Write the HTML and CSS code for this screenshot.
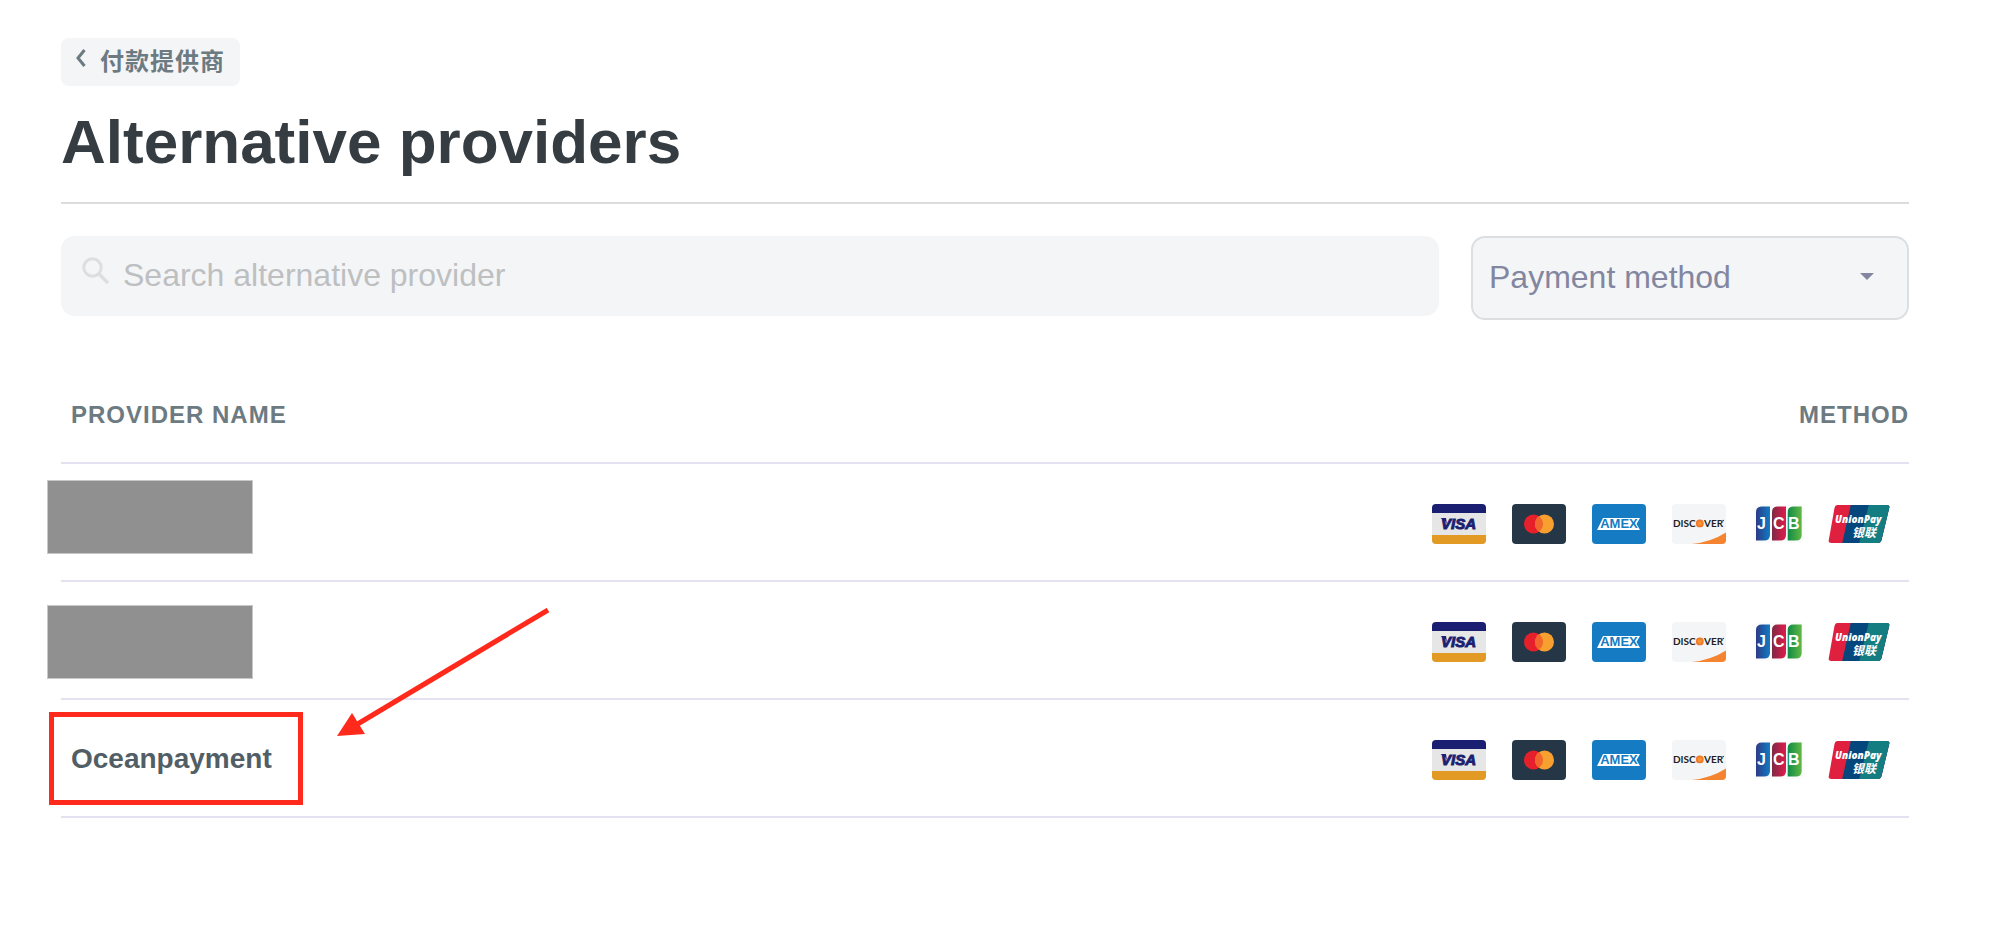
FILE: index.html
```html
<!DOCTYPE html>
<html lang="zh-CN">
<head>
<meta charset="utf-8">
<meta name="viewport" content="width=device-width, initial-scale=1">
<title>Alternative providers</title>
<link rel="stylesheet" href="styles.css">
</head>
<body>
<svg class="defs" aria-hidden="true">
  <defs>
    <linearGradient id="jcb-blue"><stop offset="0" stop-color="#2e3a86"/><stop offset="1" stop-color="#0f7cc4"/></linearGradient>
    <linearGradient id="jcb-red"><stop offset="0" stop-color="#7d2a46"/><stop offset="1" stop-color="#e21b4b"/></linearGradient>
    <linearGradient id="jcb-green"><stop offset="0" stop-color="#0f8a46"/><stop offset="1" stop-color="#62b846"/></linearGradient>
    <radialGradient id="disc-dot"><stop offset="0" stop-color="#f9a13a"/><stop offset="1" stop-color="#ef6f24"/></radialGradient>
    <clipPath id="card-clip"><rect width="54" height="40" rx="4"/></clipPath>
    <clipPath id="up-clip"><path d="M5.500 1H54.500Q58 1 57.200 4L49.500 36Q48.700 39 45.500 39H-0.500Q-4 39 -3.200 36L2.500 4Q3.200 1 5.500 1Z"/></clipPath>
  </defs>
  <symbol id="visa" viewBox="0 0 54 40">
    <g clip-path="url(#card-clip)">
      <rect width="54" height="40" fill="#e6e6e6"/>
      <rect width="54" height="9" fill="#1a1f71"/>
      <rect y="31" width="54" height="9" fill="#e39a25"/>
    </g>
    <path d="M8.500 14H14L15 20Q13 16 8.500 14Z" fill="#1a1f71"/>
  </symbol>
  <symbol id="mastercard" viewBox="0 0 54 40">
    <rect width="54" height="40" rx="4" fill="#253747"/>
    <circle cx="21.500" cy="20" r="9.500" fill="#e6202b"/>
    <circle cx="32.500" cy="20" r="9.500" fill="#f7a030"/>
    <path d="M27 12.250A9.500 9.500 0 0 1 27 27.750A9.500 9.500 0 0 1 27 12.250Z" fill="#f1662c"/>
  </symbol>
  <symbol id="amex" viewBox="0 0 54 40">
    <rect width="54" height="40" rx="4" fill="#157cc3"/>
    <path d="M5 26L11 14H48L44.500 20L48 26Z" fill="#fff"/>
  </symbol>
  <symbol id="discover" viewBox="0 0 54 40">
    <g clip-path="url(#card-clip)">
      <rect width="54" height="40" fill="#f4f5f7"/>
      <path d="M20 40Q39 38 54 28.500V40Z" fill="#f58430"/>
    </g>
    <circle cx="27.800" cy="19.400" r="3.900" fill="url(#disc-dot)"/>
    <circle cx="51.200" cy="16.500" r=".7" fill="#231f20"/>
  </symbol>
  <symbol id="jcb" viewBox="0 0 54 40">
    <rect x="1.500" y="0.500" width="51" height="38.500" rx="5" fill="#fbfbfc"/>
    <path d="M4 8Q4 2.500 10 2.500H18V31Q18 36.500 12 36.500H4Z" fill="url(#jcb-blue)"/>
    <path d="M20 8Q20 2.500 25.500 2.500H34V31Q34 36.500 28 36.500H20Z" fill="url(#jcb-red)"/>
    <path d="M35.700 8Q35.700 2.500 41.500 2.500H49.700V31Q49.700 36.500 44 36.500H35.700Z" fill="url(#jcb-green)"/>
  </symbol>
  <symbol id="unionpay" viewBox="0 0 54 40" overflow="visible">
    <g clip-path="url(#up-clip)">
      <rect x="-4" width="62" height="40" fill="#e0203f"/>
      <path d="M19 0H60V40H10Z" fill="#05477c"/>
      <path d="M37 0H60V40H27Z" fill="#147d82"/>
    </g>
  </symbol>
</svg>

<main class="page">
  <a class="back" href="#">
    <svg class="back-icon" viewBox="0 0 10 18" aria-hidden="true"><path d="M8.500 1L2 9L8.500 17" fill="none" stroke="#6c7a82" stroke-width="3"/></svg>
    <span>付款提供商</span>
  </a>
  <h1 class="title">Alternative providers</h1>

  <form class="filters">
    <div class="search">
      <svg class="search-icon" viewBox="0 0 28 28" aria-hidden="true"><circle cx="10.500" cy="10.500" r="8.700" fill="none" stroke="#dcdfe2" stroke-width="3"/><path d="M17 17L26 26" stroke="#dcdfe2" stroke-width="3.600"/></svg>
      <input class="search-input" type="search" aria-label="Search alternative provider" placeholder="Search alternative provider">
    </div>
    <div class="method">
      <select class="method-select" aria-label="Payment method"><option>Payment method</option></select>
      <svg class="method-arrow" viewBox="0 0 14 7" aria-hidden="true"><path d="M0 0H14L7 7Z" fill="#82869f"/></svg>
    </div>
  </form>

  <table class="providers">
    <thead>
      <tr><th scope="col">PROVIDER NAME</th><th scope="col">METHOD</th></tr>
    </thead>
    <tbody>
      <tr>
        <td><div class="mask"></div></td>
        <td><div class="cards">
          <svg class="card"><use href="#visa"/><text class="visa-text" x="9" y="25">VISA</text></svg>
          <svg class="card" role="img" aria-label="Mastercard"><use href="#mastercard"/></svg>
          <svg class="card"><use href="#amex"/><text class="amex-text" x="27" y="24">AMEX</text></svg>
          <svg class="card"><use href="#discover"/><text class="discover-text" x="1" y="23">DISC</text><text class="discover-text" x="32" y="23">VER</text></svg>
          <svg class="card"><use href="#jcb"/><text class="jcb-text" x="5" y="25">J</text><text class="jcb-text" x="21" y="25">C</text><text class="jcb-text" x="36" y="25">B</text></svg>
          <svg class="card"><use href="#unionpay"/><text class="union-text" x="3" y="19">UnionPay</text><text class="union-cn" x="20" y="33">银联</text></svg>
        </div></td>
      </tr>
      <tr>
        <td><div class="mask mask-low"></div></td>
        <td><div class="cards">
          <svg class="card"><use href="#visa"/><text class="visa-text" x="9" y="25">VISA</text></svg>
          <svg class="card" role="img" aria-label="Mastercard"><use href="#mastercard"/></svg>
          <svg class="card"><use href="#amex"/><text class="amex-text" x="27" y="24">AMEX</text></svg>
          <svg class="card"><use href="#discover"/><text class="discover-text" x="1" y="23">DISC</text><text class="discover-text" x="32" y="23">VER</text></svg>
          <svg class="card"><use href="#jcb"/><text class="jcb-text" x="5" y="25">J</text><text class="jcb-text" x="21" y="25">C</text><text class="jcb-text" x="36" y="25">B</text></svg>
          <svg class="card"><use href="#unionpay"/><text class="union-text" x="3" y="19">UnionPay</text><text class="union-cn" x="20" y="33">银联</text></svg>
        </div></td>
      </tr>
      <tr>
        <td>
          Oceanpayment
          <div class="highlight"></div>
          <svg class="arrow" viewBox="0 0 214 130" aria-hidden="true"><path d="M212 2L20 117" stroke="#ff2a1c" stroke-width="5"/><path d="M1 128L16 105L29 126Z" fill="#ff2a1c"/></svg>
        </td>
        <td><div class="cards">
          <svg class="card"><use href="#visa"/><text class="visa-text" x="9" y="25">VISA</text></svg>
          <svg class="card" role="img" aria-label="Mastercard"><use href="#mastercard"/></svg>
          <svg class="card"><use href="#amex"/><text class="amex-text" x="27" y="24">AMEX</text></svg>
          <svg class="card"><use href="#discover"/><text class="discover-text" x="1" y="23">DISC</text><text class="discover-text" x="32" y="23">VER</text></svg>
          <svg class="card"><use href="#jcb"/><text class="jcb-text" x="5" y="25">J</text><text class="jcb-text" x="21" y="25">C</text><text class="jcb-text" x="36" y="25">B</text></svg>
          <svg class="card"><use href="#unionpay"/><text class="union-text" x="3" y="19">UnionPay</text><text class="union-cn" x="20" y="33">银联</text></svg>
        </div></td>
      </tr>
    </tbody>
  </table>
</main>
</body>
</html>
```
FILE: styles.css
```css
* { box-sizing: border-box; }

body {
  margin: 0;
  background: #fff;
  color: #363d42;
  font-family: "Liberation Sans", Arial, "Noto Sans CJK SC", sans-serif;
}

.defs { position: absolute; width: 0; height: 0; }

.page { padding: 38px 97px 48px 61px; }

/* Header */
.back {
  display: flex;
  width: fit-content;
  height: 48px;
  align-items: center;
  gap: 14px;
  padding: 0 15px;
  border-radius: 8px;
  background: #f4f5f7;
  color: #6c7a82;
  font-size: 24px;
  font-weight: 700;
  line-height: 32px;
  letter-spacing: 1px;
  text-decoration: none;
}

.back-icon { width: 10px; height: 18px; margin-bottom: 8px; }

.title {
  margin: 20px 0 32px;
  padding-bottom: 24px;
  border-bottom: 2px solid #dcdcdc;
  font-size: 62px;
  line-height: 72px;
}

/* Filters */
.filters { display: flex; align-items: flex-start; gap: 32px; }

.search { position: relative; flex: 1; }

.search-icon {
  position: absolute;
  left: 21px;
  top: 21px;
  width: 28px;
  height: 28px;
}

.search-input {
  display: block;
  width: 100%;
  height: 80px;
  padding: 0 24px 2px 62px;
  border: 0;
  border-radius: 14px;
  background: #f4f5f7;
  color: #363d42;
  font-family: inherit;
  font-size: 32px;
  appearance: none;
}

.search-input::placeholder { color: #bdbfc1; opacity: 1; }

.method { position: relative; flex: 0 0 438px; }

.method-select {
  display: block;
  width: 100%;
  height: 84px;
  padding: 0 56px 2px 16px;
  border: 2px solid #dcdfe2;
  border-radius: 14px;
  background: #f4f5f7;
  color: #82869f;
  font-family: inherit;
  font-size: 32px;
  appearance: none;
}

.method-arrow {
  position: absolute;
  right: 35px;
  top: 37px;
  width: 14px;
  height: 7px;
  pointer-events: none;
}

/* Providers table */
.providers { width: 100%; margin-top: 48px; border-spacing: 0; }

.providers th {
  padding: 31px 0 31px 10px;
  border-bottom: 2px solid #e4e2f0;
  color: #6c7a82;
  font-size: 24px;
  line-height: 32px;
  letter-spacing: 1px;
  text-align: left;
}

.providers th:last-child { padding-left: 0; text-align: right; }

.providers td {
  position: relative;
  padding: 2px 0 0 10px;
  border-bottom: 2px solid #e4e2f0;
  color: #525e66;
  font-size: 28px;
  font-weight: 700;
  line-height: 32px;
}

.providers td:last-child { padding: 40px 23px 36px 0; }

.cards { display: flex; justify-content: flex-end; gap: 26px; }

.card { width: 54px; height: 40px; overflow: visible; }

/* Annotations over the table */
.mask {
  position: absolute;
  left: -14px;
  top: 16px;
  width: 206px;
  height: 74px;
  border: 1px solid #c8c8c8;
  background: #909090;
}

.mask-low { top: 23px; }

.highlight {
  position: absolute;
  left: -12px;
  top: 12px;
  width: 254px;
  height: 93px;
  border: 5px solid #ff2a1c;
}

.arrow {
  position: absolute;
  left: 275px;
  top: -92px;
  width: 214px;
  height: 130px;
}

/* Card marks */
.visa-text {
  font: italic 700 15px "Liberation Sans", sans-serif;
  fill: #1a1f71;
  stroke: #1a1f71;
  stroke-width: 1px;
}

.amex-text { font: 700 13px "Liberation Sans", sans-serif; fill: #157cc3; text-anchor: middle; }

.discover-text { font: 700 10px Lato, sans-serif; fill: #231f20; }

.jcb-text { font: 700 16px "Liberation Sans", sans-serif; fill: #fff; }

.union-text { font: italic 800 10px "Open Sans", sans-serif; fill: #fff; }

.union-cn { font: italic 700 12px "Noto Sans CJK SC", sans-serif; fill: #fff; }
```
